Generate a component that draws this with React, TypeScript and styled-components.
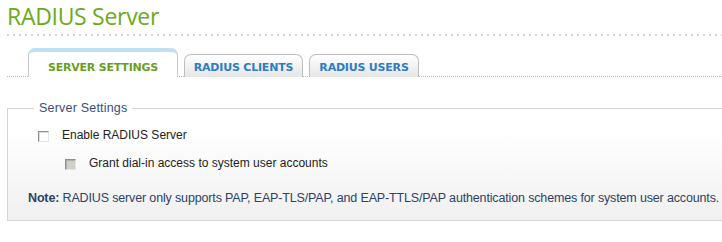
import styled, { createGlobalStyle } from 'styled-components';

const GlobalStyle = createGlobalStyle`
  body {
    margin: 0;
    background: #ffffff;
    font-family: 'Liberation Sans', Arial, sans-serif;
  }
`;

const TABS = [
  { id: 'server', label: 'SERVER SETTINGS', width: 150 },
  { id: 'clients', label: 'RADIUS CLIENTS', width: 119 },
  { id: 'users', label: 'RADIUS USERS', width: 110 },
];

export default function App(): JSX.Element {
  const activeTab = 'server';

  return (
    <Page>
      <GlobalStyle />
      <Title>RADIUS Server</Title>
      <TitleRule />
      <TabStrip>
        {TABS.map((tab) => (
          <Tab key={tab.id} $active={tab.id === activeTab} $width={tab.width}>
            {tab.label}
          </Tab>
        ))}
      </TabStrip>
      <Settings>
        <Legend>Server Settings</Legend>
        <OptionRow>
          <CheckBox />
          <OptionLabel>Enable RADIUS Server</OptionLabel>
        </OptionRow>
        <OptionRow $indent>
          <CheckBox $disabled />
          <OptionLabel>Grant dial-in access to system user accounts</OptionLabel>
        </OptionRow>
        <Note>
          <b>Note:</b> RADIUS server only supports PAP, EAP-TLS/PAP, and
          EAP-TTLS/PAP authentication schemes for system user accounts.
        </Note>
      </Settings>
    </Page>
  );
}

const Page = styled.div`
  display: flex;
  flex-direction: column;
  padding: 0 0 0 7px;
  overflow: hidden;
`;

const Title = styled.h1`
  margin: 0;
  padding-top: 1px;
  font-family: 'Open Sans', 'Noto Sans', sans-serif;
  font-weight: 400;
  font-size: 23px;
  line-height: 30px;
  color: #6aab1c;
  letter-spacing: -0.3px;
`;

const TitleRule = styled.div`
  height: 2px;
  margin-top: 3px;
  background-image: linear-gradient(to right, #d2d2d2 2px, transparent 2px);
  background-size: 6px 2px;
  background-repeat: repeat-x;
`;

const TabStrip = styled.div`
  display: flex;
  align-items: flex-end;
  gap: 6px;
  height: 40px;
  padding-left: 21px;
  border-bottom: 1px dotted #b8b8b8;
`;

const Tab = styled.div<{ $active: boolean; $width: number }>`
  box-sizing: border-box;
  width: ${({ $width }) => $width}px;
  height: ${({ $active }) => ($active ? 29 : 23)}px;
  display: flex;
  align-items: center;
  justify-content: center;
  padding-top: ${({ $active }) => ($active ? 6 : 2)}px;
  font-family: 'DejaVu Sans', Verdana, sans-serif;
  font-weight: 700;
  font-size: 11px;
  letter-spacing: -0.2px;
  color: ${({ $active }) => ($active ? '#6a9f1e' : '#2c7dc3')};
  border: 1px solid ${({ $active }) => ($active ? '#c9c9c9' : '#bdbdbd')};
  border-top: ${({ $active }) =>
    $active ? '4px solid #bfdff5' : '1px solid #bdbdbd'};
  border-bottom: none;
  border-radius: 7px 7px 0 0;
  background: ${({ $active }) =>
    $active ? '#ffffff' : 'linear-gradient(#ffffff, #e6e6e6)'};
  margin-bottom: -1px;
`;

const Settings = styled.fieldset`
  margin: 24px -4px 0 0;
  padding: 6px 0 15px 0;
  min-width: 0;
  border: 1px solid #d4d4d4;
  border-right: none;
  background: linear-gradient(#ffffff 20%, #f0f0f0);
`;

const Legend = styled.legend`
  margin-left: 26px;
  padding: 0 5px;
  font-size: 12.5px;
  letter-spacing: 0.2px;
  color: #354f7d;
`;

const OptionRow = styled.label<{ $indent?: boolean }>`
  display: flex;
  align-items: center;
  gap: 13px;
  height: 28px;
  padding-left: ${({ $indent }) => ($indent ? 57 : 30)}px;
`;

const CheckBox = styled.span<{ $disabled?: boolean }>`
  box-sizing: border-box;
  width: 11px;
  height: 11px;
  margin-top: 3px;
  border: 1px solid #8f8f8f;
  border-right-color: #e4e4e4;
  border-bottom-color: #e4e4e4;
  background: ${({ $disabled }) => ($disabled ? '#d0d0ca' : '#ffffff')};
  box-shadow: inset 1px 1px 0
    ${({ $disabled }) => ($disabled ? '#b0b0aa' : '#dcdcdc')};
`;

const OptionLabel = styled.span`
  font-size: 12px;
  color: #222222;
`;

const Note = styled.p`
  margin: 14px 0 0 20px;
  font-size: 12.5px;
  letter-spacing: -0.15px;
  color: #2e4268;
  white-space: nowrap;
  b {
    font-weight: 700;
  }
`;
